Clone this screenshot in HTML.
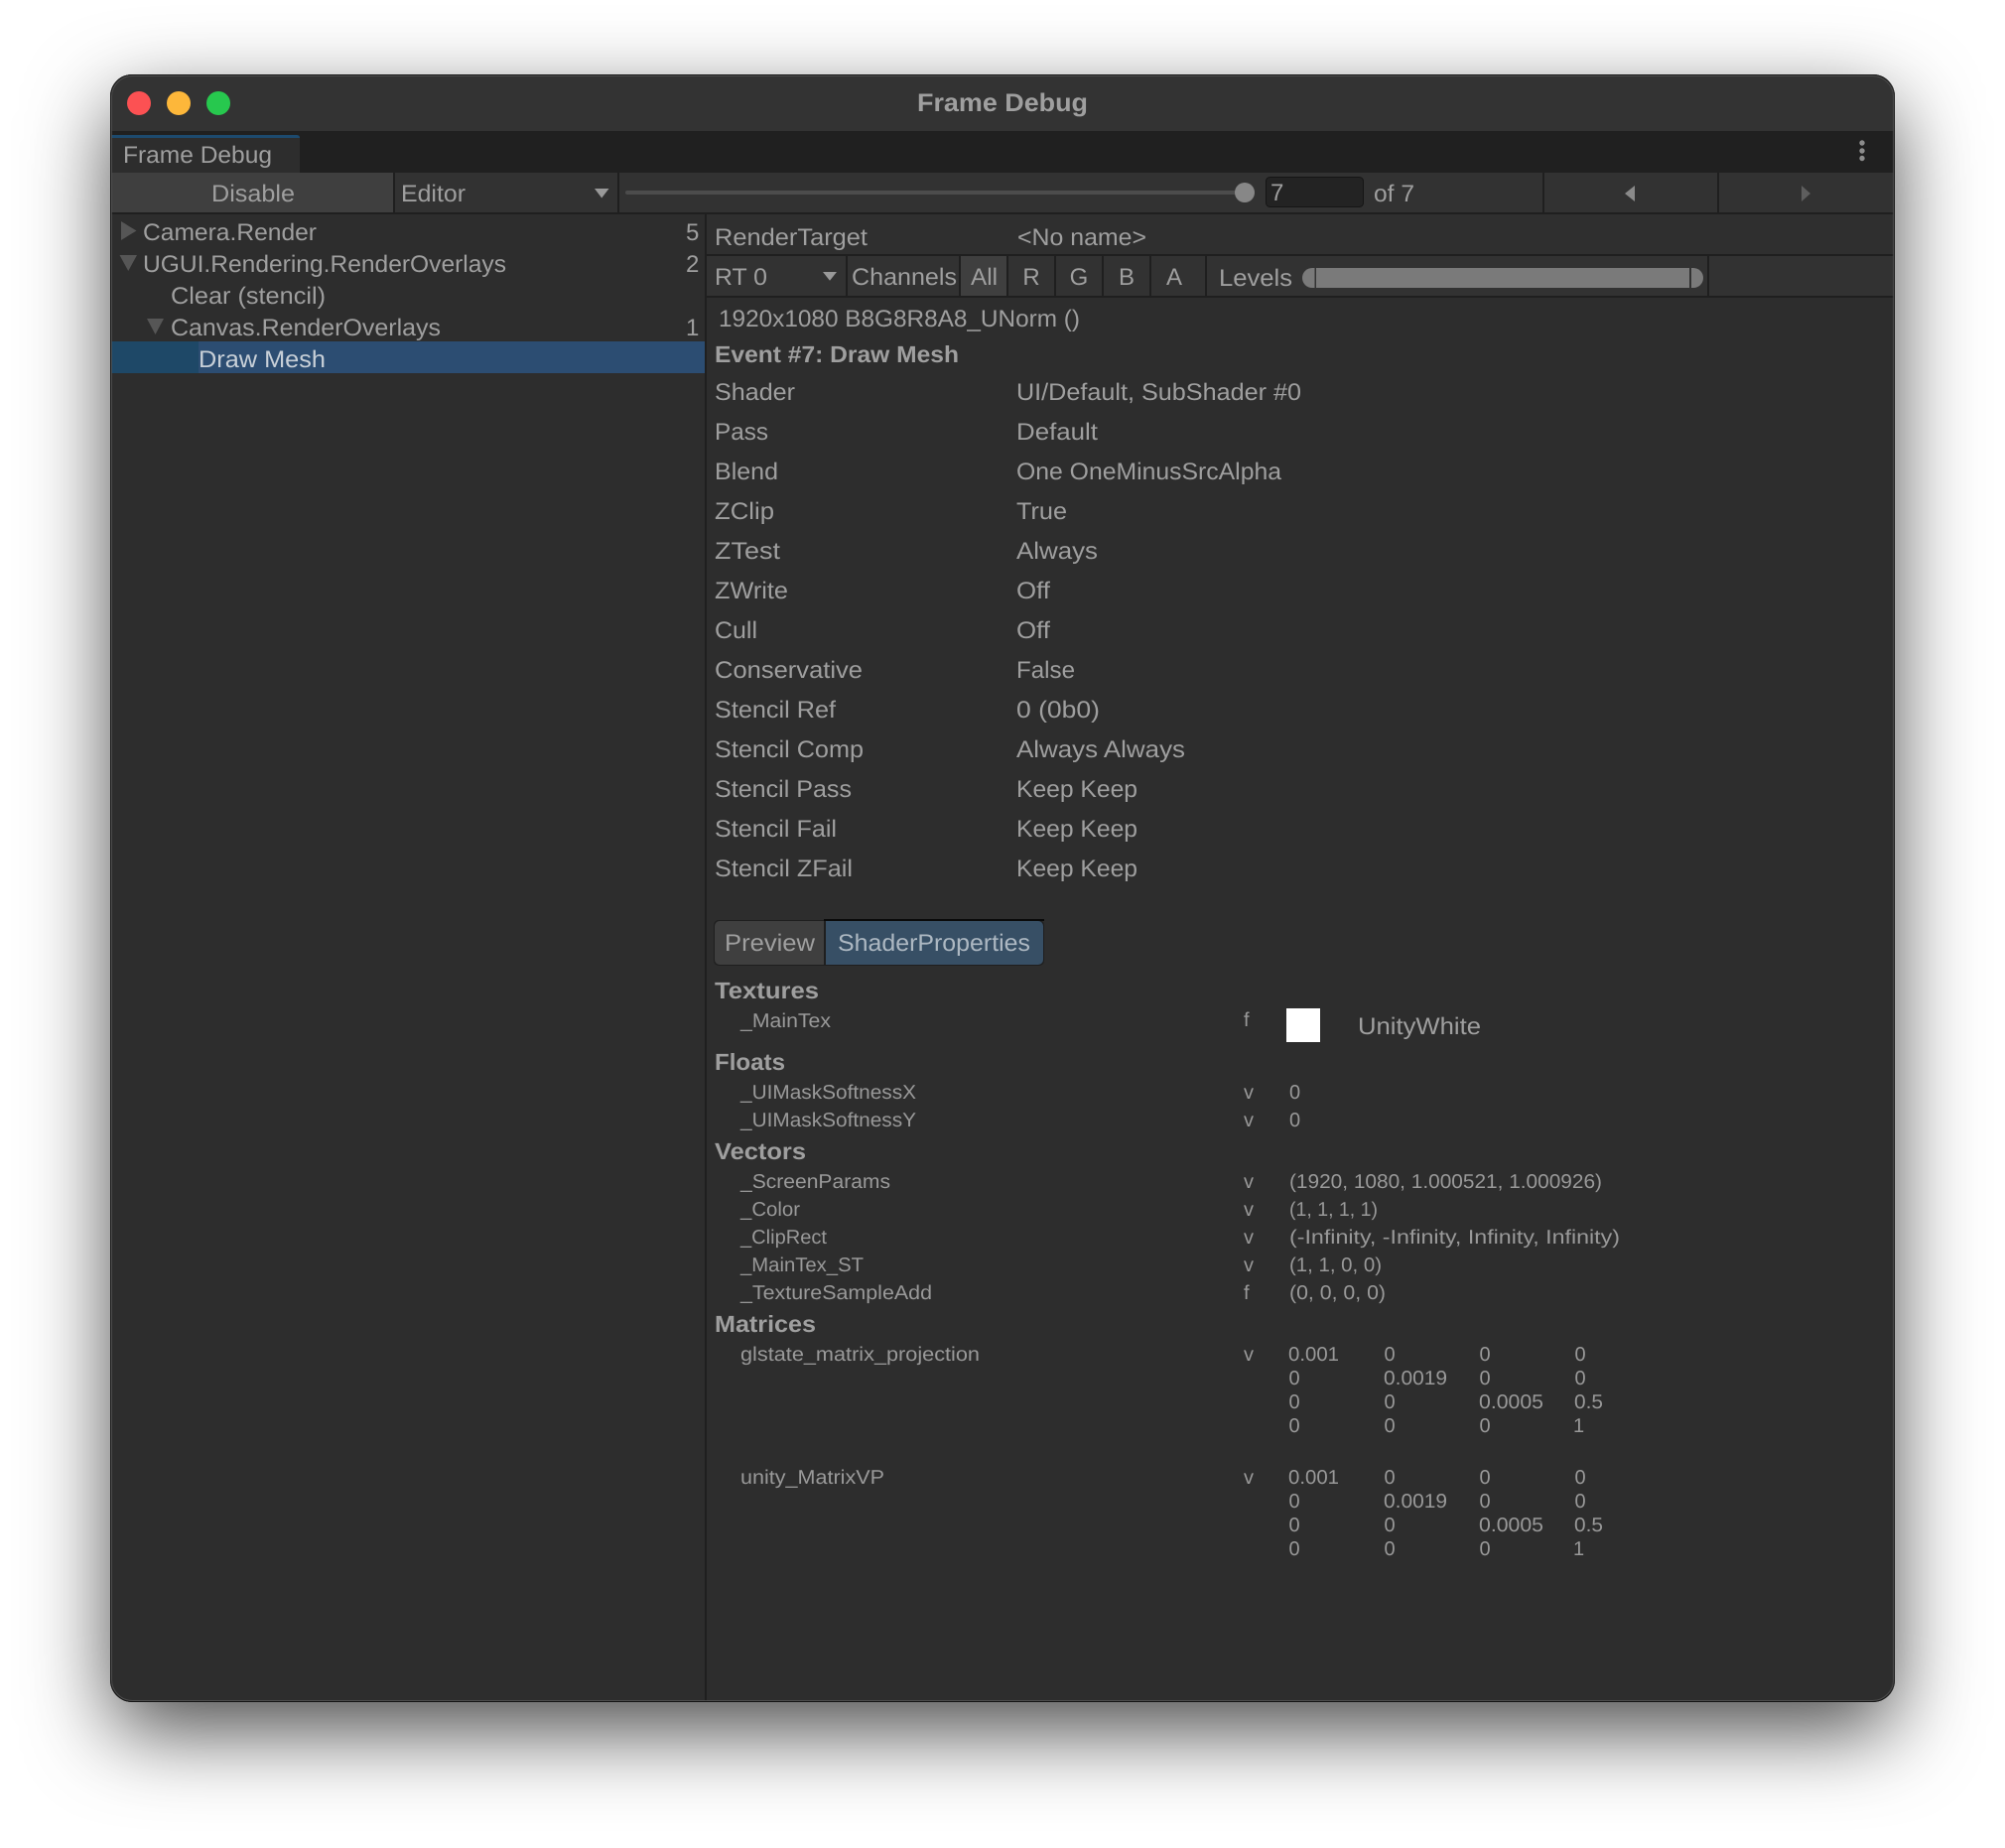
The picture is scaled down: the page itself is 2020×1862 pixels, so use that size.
<!DOCTYPE html>
<html lang="en"><head><meta charset="utf-8"><title>Frame Debug</title>
<style>
html,body{margin:0;padding:0;background:#fff;width:2020px;height:1862px;overflow:hidden}
#win{position:absolute;left:111px;top:75px;width:1798px;height:1640px;border-radius:22px;background:#2d2d2d;box-shadow:0 30px 85px -2px rgba(0,0,0,.72)}
svg{position:absolute;left:0;top:0}
text{font-family:"Liberation Sans",sans-serif;fill:#9f9f9f;text-rendering:geometricPrecision}
.b{font-size:24px}
.s{font-size:20px;fill:#999}
.h{font-size:23.5px;font-weight:bold}
</style></head><body>
<div id="win"></div>
<svg width="2020" height="1862" viewBox="0 0 2020 1862" xmlns="http://www.w3.org/2000/svg">
<defs><clipPath id="c"><rect x="111" y="75" width="1798" height="1640" rx="22"/></clipPath></defs>
<g clip-path="url(#c)">
<rect x="111" y="75" width="1798" height="1640" fill="#2d2d2d"/>
<rect x="111" y="75" width="1798" height="57" fill="#333"/>
<rect x="111" y="132" width="1798" height="42" fill="#202020"/>
<rect x="112" y="139" width="190" height="35" fill="#2d2d2d"/>
<path d="M112 136H299q3 0 3 3H112z" fill="#1d4a6e"/>
<rect x="111" y="174" width="1798" height="40" fill="#323232"/>
<rect x="111" y="174" width="285" height="40" fill="#3f3f3f"/>
<rect x="111" y="214" width="1798" height="2" fill="#1f1f1f"/>
<rect x="396" y="174" width="2" height="40" fill="#1f1f1f"/>
<rect x="622" y="174" width="2" height="40" fill="#1f1f1f"/>
<rect x="1554" y="174" width="2" height="40" fill="#1f1f1f"/>
<rect x="1730" y="174" width="2" height="40" fill="#1f1f1f"/>
<rect x="630" y="192" width="620" height="4" rx="2" fill="#4c4c4c"/>
<circle cx="1254" cy="194" r="10" fill="#878787"/>
<rect x="1275.5" y="178.5" width="98" height="30" rx="4" fill="#232323" stroke="#151515"/>
<path d="M599 190H613.5L606.2 199.5z" fill="#999"/>
<path d="M1647 187V203L1637 195z" fill="#8a8a8a"/>
<path d="M1815 187V203L1824 195z" fill="#5e5e5e"/>
<circle cx="1876" cy="144" r="2.7" fill="#8c8c8c"/><circle cx="1876" cy="152" r="2.7" fill="#8c8c8c"/><circle cx="1876" cy="159.5" r="2.7" fill="#8c8c8c"/>

<rect x="112" y="344" width="598" height="32" fill="#2c4d72"/>
<rect x="112" y="344" width="88" height="32" fill="#1e4867"/>
<rect x="710" y="216" width="2" height="1499" fill="#1f1f1f"/>
<path d="M122 223L137.500 232.500L122 242z" fill="#565656"/>
<path d="M120.500 257H138L129.250 273z" fill="#565656"/>
<path d="M148 321H165L156.500 337z" fill="#565656"/>

<rect x="712" y="216" width="1197" height="40" fill="#2f2f2f"/>
<rect x="712" y="258" width="1197" height="40" fill="#323232"/>
<rect x="712" y="256" width="1197" height="2" fill="#1f1f1f"/>
<rect x="712" y="298" width="1197" height="2" fill="#1f1f1f"/>
<rect x="968" y="258" width="46" height="40" fill="#3f3f3f"/>
<g fill="#1f1f1f">
<rect x="852" y="258" width="2" height="40"/><rect x="966" y="258" width="2" height="40"/><rect x="1014" y="258" width="2" height="40"/><rect x="1062" y="258" width="2" height="40"/><rect x="1110" y="258" width="2" height="40"/><rect x="1158" y="258" width="2" height="40"/><rect x="1214" y="258" width="2" height="40"/><rect x="1720" y="258" width="2" height="40"/>
</g>
<path d="M829 274H843L836 282.700z" fill="#999"/>
<path d="M1324.500 270H1322a10 10 0 0 0 0 20H1324.500z" fill="#7a7a7a"/>
<rect x="1326" y="270" width="376" height="20" fill="#7a7a7a"/>
<path d="M1704 270H1706a10 10 0 0 1 0 20H1704z" fill="#7a7a7a"/>

<rect x="719" y="927" width="333" height="46" rx="5" fill="#1f1f1f"/>
<path d="M830 928H725a5 5 0 0 0-5 5V967a5 5 0 0 0 5 5H830z" fill="#3f3f3f"/>
<path d="M832 928H1046a5 5 0 0 1 5 5V967a5 5 0 0 1-5 5H832z" fill="#374f65"/>
<rect x="830" y="926" width="222" height="2" fill="#0a0a0a"/>
<rect x="1296" y="1016" width="34" height="34" fill="#fff"/>
</g>
<rect x="111.500" y="75.500" width="1797" height="1639" rx="22" fill="none" stroke="#141414"/>
<rect x="112.500" y="76.500" width="1795" height="1637" rx="21" fill="none" stroke="#555" stroke-opacity=".8"/>
<circle cx="140" cy="104" r="12" fill="#fc5153"/>
<circle cx="180" cy="104" r="12" fill="#fdb73a"/>
<circle cx="220" cy="104" r="12" fill="#27c84e"/>

<text class="h" x="924" y="112" textLength="172" lengthAdjust="spacingAndGlyphs" style="font-size:25.5px">Frame Debug</text>
<text class="b" x="124" y="164" textLength="150" lengthAdjust="spacingAndGlyphs">Frame Debug</text>
<text class="b" x="213" y="203" textLength="84" lengthAdjust="spacingAndGlyphs">Disable</text>
<text class="b" x="404" y="203" textLength="65" lengthAdjust="spacingAndGlyphs">Editor</text>
<text class="b" x="1280" y="202">7</text>
<text class="b" x="1384" y="203" textLength="41" lengthAdjust="spacingAndGlyphs">of 7</text>

<text class="b" x="144" y="242" textLength="175" lengthAdjust="spacingAndGlyphs">Camera.Render</text>
<text class="b" x="144" y="274" textLength="366" lengthAdjust="spacingAndGlyphs">UGUI.Rendering.RenderOverlays</text>
<text class="b" x="172" y="306" textLength="156" lengthAdjust="spacingAndGlyphs">Clear (stencil)</text>
<text class="b" x="172" y="338" textLength="272" lengthAdjust="spacingAndGlyphs">Canvas.RenderOverlays</text>
<text class="b" x="200" y="370" textLength="128" lengthAdjust="spacingAndGlyphs" style="fill:#c8d0d8">Draw Mesh</text>
<text class="b" x="691" y="242">5</text>
<text class="b" x="691" y="274">2</text>
<text class="b" x="691" y="338">1</text>

<text class="b" x="720" y="247" textLength="154" lengthAdjust="spacingAndGlyphs">RenderTarget</text>
<text class="b" x="1025" y="247" textLength="130" lengthAdjust="spacingAndGlyphs">&lt;No name&gt;</text>
<text class="b" x="720" y="287" textLength="53" lengthAdjust="spacingAndGlyphs">RT 0</text>
<text class="b" x="858" y="287" textLength="106" lengthAdjust="spacingAndGlyphs">Channels</text>
<text class="b" x="978" y="287" textLength="27" lengthAdjust="spacingAndGlyphs">All</text>
<text class="b" x="1039" y="287" text-anchor="middle">R</text>
<text class="b" x="1087" y="287" text-anchor="middle">G</text>
<text class="b" x="1135" y="287" text-anchor="middle">B</text>
<text class="b" x="1183" y="287" text-anchor="middle">A</text>
<text class="b" x="1228" y="288" textLength="74" lengthAdjust="spacingAndGlyphs">Levels</text>
<text class="b" x="724" y="329" textLength="364" lengthAdjust="spacingAndGlyphs">1920x1080 B8G8R8A8_UNorm ()</text>
<text class="h" x="720" y="365" textLength="246" lengthAdjust="spacingAndGlyphs">Event #7: Draw Mesh</text>

<text class="b" x="720" y="403" textLength="81" lengthAdjust="spacingAndGlyphs">Shader</text>
<text class="b" x="720" y="443" textLength="54" lengthAdjust="spacingAndGlyphs">Pass</text>
<text class="b" x="720" y="483" textLength="64" lengthAdjust="spacingAndGlyphs">Blend</text>
<text class="b" x="720" y="523" textLength="60" lengthAdjust="spacingAndGlyphs">ZClip</text>
<text class="b" x="720" y="563" textLength="66" lengthAdjust="spacingAndGlyphs">ZTest</text>
<text class="b" x="720" y="603" textLength="74" lengthAdjust="spacingAndGlyphs">ZWrite</text>
<text class="b" x="720" y="643" textLength="43" lengthAdjust="spacingAndGlyphs">Cull</text>
<text class="b" x="720" y="683" textLength="149" lengthAdjust="spacingAndGlyphs">Conservative</text>
<text class="b" x="720" y="723" textLength="122" lengthAdjust="spacingAndGlyphs">Stencil Ref</text>
<text class="b" x="720" y="763" textLength="150" lengthAdjust="spacingAndGlyphs">Stencil Comp</text>
<text class="b" x="720" y="803" textLength="138" lengthAdjust="spacingAndGlyphs">Stencil Pass</text>
<text class="b" x="720" y="843" textLength="123" lengthAdjust="spacingAndGlyphs">Stencil Fail</text>
<text class="b" x="720" y="883" textLength="139" lengthAdjust="spacingAndGlyphs">Stencil ZFail</text>

<text class="b" x="1024" y="403" textLength="287" lengthAdjust="spacingAndGlyphs">UI/Default, SubShader #0</text>
<text class="b" x="1024" y="443" textLength="82" lengthAdjust="spacingAndGlyphs">Default</text>
<text class="b" x="1024" y="483" textLength="267" lengthAdjust="spacingAndGlyphs">One OneMinusSrcAlpha</text>
<text class="b" x="1024" y="523" textLength="51" lengthAdjust="spacingAndGlyphs">True</text>
<text class="b" x="1024" y="563" textLength="82" lengthAdjust="spacingAndGlyphs">Always</text>
<text class="b" x="1024" y="603" textLength="34" lengthAdjust="spacingAndGlyphs">Off</text>
<text class="b" x="1024" y="643" textLength="34" lengthAdjust="spacingAndGlyphs">Off</text>
<text class="b" x="1024" y="683" textLength="59" lengthAdjust="spacingAndGlyphs">False</text>
<text class="b" x="1024" y="723" textLength="84" lengthAdjust="spacingAndGlyphs">0 (0b0)</text>
<text class="b" x="1024" y="763" textLength="170" lengthAdjust="spacingAndGlyphs">Always Always</text>
<text class="b" x="1024" y="803" textLength="122" lengthAdjust="spacingAndGlyphs">Keep Keep</text>
<text class="b" x="1024" y="843" textLength="122" lengthAdjust="spacingAndGlyphs">Keep Keep</text>
<text class="b" x="1024" y="883" textLength="122" lengthAdjust="spacingAndGlyphs">Keep Keep</text>

<text class="b" x="730" y="958" textLength="91" lengthAdjust="spacingAndGlyphs">Preview</text>
<text class="b" x="844" y="958" textLength="194" lengthAdjust="spacingAndGlyphs" style="fill:#adb8c2">ShaderProperties</text>

<text class="h" x="720" y="1006" textLength="105" lengthAdjust="spacingAndGlyphs">Textures</text>
<text class="s" x="746" y="1035" textLength="91" lengthAdjust="spacingAndGlyphs">_MainTex</text>
<text class="s" x="1253" y="1034">f</text>
<text class="b" x="1368" y="1042" textLength="124" lengthAdjust="spacingAndGlyphs">UnityWhite</text>

<text class="h" x="720" y="1078" textLength="71" lengthAdjust="spacingAndGlyphs">Floats</text>
<text class="s" x="746" y="1107" textLength="177" lengthAdjust="spacingAndGlyphs">_UIMaskSoftnessX</text>
<text class="s" x="746" y="1135" textLength="177" lengthAdjust="spacingAndGlyphs">_UIMaskSoftnessY</text>
<text class="s" x="1253" y="1107">v</text><text class="s" x="1299" y="1107">0</text>
<text class="s" x="1253" y="1135">v</text><text class="s" x="1299" y="1135">0</text>

<text class="h" x="720" y="1168" textLength="92" lengthAdjust="spacingAndGlyphs">Vectors</text>
<text class="s" x="746" y="1197" textLength="151" lengthAdjust="spacingAndGlyphs">_ScreenParams</text>
<text class="s" x="746" y="1225" textLength="60" lengthAdjust="spacingAndGlyphs">_Color</text>
<text class="s" x="746" y="1253" textLength="87" lengthAdjust="spacingAndGlyphs">_ClipRect</text>
<text class="s" x="746" y="1281" textLength="124" lengthAdjust="spacingAndGlyphs">_MainTex_ST</text>
<text class="s" x="746" y="1309" textLength="193" lengthAdjust="spacingAndGlyphs">_TextureSampleAdd</text>
<text class="s" x="1253" y="1197">v</text><text class="s" x="1253" y="1225">v</text><text class="s" x="1253" y="1253">v</text><text class="s" x="1253" y="1281">v</text><text class="s" x="1253" y="1309">f</text>
<text class="s" x="1299" y="1197" textLength="315" lengthAdjust="spacingAndGlyphs">(1920, 1080, 1.000521, 1.000926)</text>
<text class="s" x="1299" y="1225" textLength="89" lengthAdjust="spacingAndGlyphs">(1, 1, 1, 1)</text>
<text class="s" x="1299" y="1253" textLength="333" lengthAdjust="spacingAndGlyphs">(-Infinity, -Infinity, Infinity, Infinity)</text>
<text class="s" x="1299" y="1281" textLength="93" lengthAdjust="spacingAndGlyphs">(1, 1, 0, 0)</text>
<text class="s" x="1299" y="1309" textLength="97" lengthAdjust="spacingAndGlyphs">(0, 0, 0, 0)</text>

<text class="h" x="720" y="1342" textLength="102" lengthAdjust="spacingAndGlyphs">Matrices</text>
<text class="s" x="746" y="1371" textLength="241" lengthAdjust="spacingAndGlyphs">glstate_matrix_projection</text>
<text class="s" x="1253" y="1371">v</text>
<text class="s" x="1298" y="1371" textLength="51" lengthAdjust="spacingAndGlyphs">0.001</text><text class="s" x="1394.500" y="1371">0</text><text class="s" x="1490.500" y="1371">0</text><text class="s" x="1586.500" y="1371">0</text>
<text class="s" x="1298.500" y="1395">0</text><text class="s" x="1394" y="1395" textLength="64" lengthAdjust="spacingAndGlyphs">0.0019</text><text class="s" x="1490.500" y="1395">0</text><text class="s" x="1586.500" y="1395">0</text>
<text class="s" x="1298.500" y="1419">0</text><text class="s" x="1394.500" y="1419">0</text><text class="s" x="1490" y="1419" textLength="65" lengthAdjust="spacingAndGlyphs">0.0005</text><text class="s" x="1586" y="1419" textLength="29" lengthAdjust="spacingAndGlyphs">0.5</text>
<text class="s" x="1298.500" y="1443">0</text><text class="s" x="1394.500" y="1443">0</text><text class="s" x="1490.500" y="1443">0</text><text class="s" x="1585" y="1443">1</text>

<text class="s" x="746" y="1495" textLength="145" lengthAdjust="spacingAndGlyphs">unity_MatrixVP</text>
<text class="s" x="1253" y="1495">v</text>
<text class="s" x="1298" y="1495" textLength="51" lengthAdjust="spacingAndGlyphs">0.001</text><text class="s" x="1394.500" y="1495">0</text><text class="s" x="1490.500" y="1495">0</text><text class="s" x="1586.500" y="1495">0</text>
<text class="s" x="1298.500" y="1519">0</text><text class="s" x="1394" y="1519" textLength="64" lengthAdjust="spacingAndGlyphs">0.0019</text><text class="s" x="1490.500" y="1519">0</text><text class="s" x="1586.500" y="1519">0</text>
<text class="s" x="1298.500" y="1543">0</text><text class="s" x="1394.500" y="1543">0</text><text class="s" x="1490" y="1543" textLength="65" lengthAdjust="spacingAndGlyphs">0.0005</text><text class="s" x="1586" y="1543" textLength="29" lengthAdjust="spacingAndGlyphs">0.5</text>
<text class="s" x="1298.500" y="1567">0</text><text class="s" x="1394.500" y="1567">0</text><text class="s" x="1490.500" y="1567">0</text><text class="s" x="1585" y="1567">1</text>
</svg>
</body></html>
